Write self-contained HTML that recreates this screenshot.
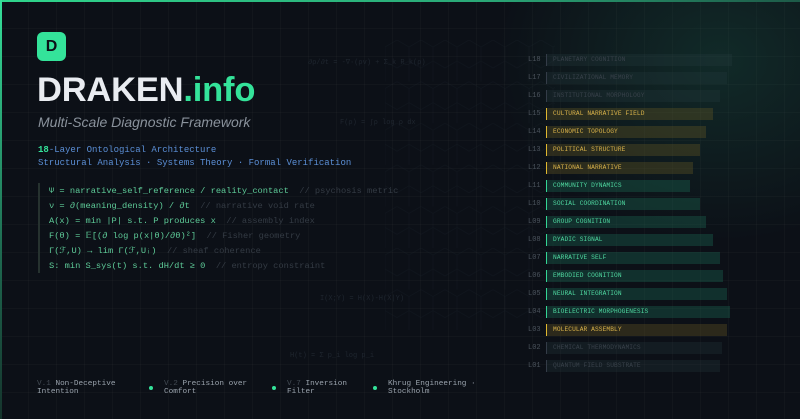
<!DOCTYPE html>
<html><head><meta charset="utf-8"><style>
*{margin:0;padding:0;box-sizing:border-box}
body{width:800px;height:419px;overflow:hidden;background:#0c1017;font-family:"Liberation Sans",sans-serif;position:relative}
.bg{position:absolute;inset:0;background:
radial-gradient(ellipse 320px 260px at 720px 60px,rgba(30,110,85,.28),transparent 70%),
linear-gradient(rgba(255,255,255,.025) 1px,transparent 1px) 0 0/28px 28px,
linear-gradient(90deg,rgba(255,255,255,.025) 1px,transparent 1px) 0 0/28px 28px,#0c1017}
.top{position:absolute;left:0;top:0;width:800px;height:2px;background:linear-gradient(90deg,#2fd58c,#2aa877 60%,#1d5a48)}
.left{position:absolute;left:0;top:0;width:2px;height:419px;background:linear-gradient(#35e09a,#1e6a50 60%,#15342c)}
.mono{font-family:"Liberation Mono","DejaVu Sans Mono",monospace}
.logo{position:absolute;left:37px;top:32px;width:29px;height:29px;border-radius:6px;background:#34e39a;color:#0c1017;font-weight:bold;font-size:16px;text-align:center;line-height:29px}
.title{position:absolute;left:37px;top:71px;font-size:34.5px;font-weight:bold;color:#e9ecf1;letter-spacing:-.2px;white-space:nowrap}
.title span{color:#34e39a}
.sub{position:absolute;left:38px;top:114px;font-size:14px;font-style:italic;color:#8a929c;white-space:nowrap}
.blue{position:absolute;left:38px;font-size:9px;color:#5b8fd6;white-space:nowrap}
.blue b{color:#34e39a}
.fbar{position:absolute;left:38px;top:183px;width:2px;height:90px;background:#26322f}
.f{position:absolute;left:49px;font-size:8.7px;color:#5ecb98;white-space:pre}
.f i{font-style:normal;color:#343b44}
.ghost{position:absolute;font-size:7px;color:#1f262f;white-space:nowrap}
.lab{position:absolute;left:528px;font-size:7px;color:#4b535c}
.bar{position:absolute;left:546px;height:12px;border-left:1.5px solid;font-size:6.2px;line-height:12px;padding-left:6px;white-space:nowrap;letter-spacing:.1px}
.g{background:rgba(40,60,65,.28);border-color:#343c48;color:#38414a}
.y{background:rgba(110,95,35,.33);border-color:#e0b830;color:#d9b24a}
.t{background:rgba(30,110,85,.35);border-color:#34d695;color:#4fd8a0}
.foot{position:absolute;top:381px;font-size:7.7px;color:#9aa3ad;line-height:7.5px;white-space:pre}
.foot em{font-style:normal;color:#434b54}
.dot{position:absolute;top:386px;width:4px;height:4px;border-radius:50%;background:#34e39a}
</style></head><body>
<div class="bg"></div>
<svg style="position:absolute;left:385px;top:40px" width="170" height="290" opacity=".2">
<defs><pattern id="h" width="24" height="41.6" patternUnits="userSpaceOnUse"><path d="M12 0l12 7v14l-12 7-12-7V7zM0 21v20.6M24 21v20.6" fill="none" stroke="#25303a" stroke-width=".8"/></pattern></defs>
<rect width="170" height="290" fill="url(#h)"/></svg>
<div class="top"></div><div class="left"></div>
<div class="logo">D</div>
<div class="title">DRAKEN<span>.info</span></div>
<div class="sub">Multi-Scale Diagnostic Framework</div>
<div class="blue mono" style="top:145px"><b>18</b>-Layer Ontological Architecture</div>
<div class="blue mono" style="top:158px">Structural Analysis · Systems Theory · Formal Verification</div>
<div class="ghost mono" style="left:308px;top:58px">∂ρ/∂t = -∇·(ρv) + Σ_k R_k(ρ)</div>
<div class="ghost mono" style="left:340px;top:119px">F(ρ) = ∫ρ log ρ dx</div>
<div class="ghost mono" style="left:320px;top:295px">I(X;Y) = H(X)-H(X|Y)</div>
<div class="ghost mono" style="left:290px;top:352px">H(t) = Σ p_i log p_i</div>
<div class="fbar"></div>
<div class="f mono" style="top:186px">Ψ = narrative_self_reference / reality_contact  <i>// psychosis metric</i></div>
<div class="f mono" style="top:201px">ν = ∂(meaning_density) / ∂t  <i>// narrative void rate</i></div>
<div class="f mono" style="top:216px">A(x) = min |P| s.t. P produces x  <i>// assembly index</i></div>
<div class="f mono" style="top:231px">F(θ) = 𝔼[(∂ log p(x|θ)/∂θ)²]  <i>// Fisher geometry</i></div>
<div class="f mono" style="top:246px">Γ(ℱ,U) → lim Γ(ℱ,Uᵢ)  <i>// sheaf coherence</i></div>
<div class="f mono" style="top:261px">S: min S_sys(t) s.t. dH/dt ≥ 0  <i>// entropy constraint</i></div>

<div class="lab mono" style="top:56px">L18</div><div class="bar mono g" style="top:54px;width:186px">PLANETARY COGNITION</div>
<div class="lab mono" style="top:74px">L17</div><div class="bar mono g" style="top:72px;width:181px">CIVILIZATIONAL MEMORY</div>
<div class="lab mono" style="top:92px">L16</div><div class="bar mono g" style="top:90px;width:174px">INSTITUTIONAL MORPHOLOGY</div>
<div class="lab mono" style="top:110px">L15</div><div class="bar mono y" style="top:108px;width:167px">CULTURAL NARRATIVE FIELD</div>
<div class="lab mono" style="top:128px">L14</div><div class="bar mono y" style="top:126px;width:160px">ECONOMIC TOPOLOGY</div>
<div class="lab mono" style="top:146px">L13</div><div class="bar mono y" style="top:144px;width:154px">POLITICAL STRUCTURE</div>
<div class="lab mono" style="top:164px">L12</div><div class="bar mono y" style="top:162px;width:147px">NATIONAL NARRATIVE</div>
<div class="lab mono" style="top:182px">L11</div><div class="bar mono t" style="top:180px;width:144px">COMMUNITY DYNAMICS</div>
<div class="lab mono" style="top:200px">L10</div><div class="bar mono t" style="top:198px;width:154px">SOCIAL COORDINATION</div>
<div class="lab mono" style="top:218px">L09</div><div class="bar mono t" style="top:216px;width:160px">GROUP COGNITION</div>
<div class="lab mono" style="top:236px">L08</div><div class="bar mono t" style="top:234px;width:167px">DYADIC SIGNAL</div>
<div class="lab mono" style="top:254px">L07</div><div class="bar mono t" style="top:252px;width:174px">NARRATIVE SELF</div>
<div class="lab mono" style="top:272px">L06</div><div class="bar mono t" style="top:270px;width:177px">EMBODIED COGNITION</div>
<div class="lab mono" style="top:290px">L05</div><div class="bar mono t" style="top:288px;width:181px">NEURAL INTEGRATION</div>
<div class="lab mono" style="top:308px">L04</div><div class="bar mono t" style="top:306px;width:184px">BIOELECTRIC MORPHOGENESIS</div>
<div class="lab mono" style="top:326px">L03</div><div class="bar mono y" style="top:324px;width:181px">MOLECULAR ASSEMBLY</div>
<div class="lab mono" style="top:344px">L02</div><div class="bar mono g" style="top:342px;width:176px">CHEMICAL THERMODYNAMICS</div>
<div class="lab mono" style="top:362px">L01</div><div class="bar mono g" style="top:360px;width:174px">QUANTUM FIELD SUBSTRATE</div>

<div class="foot mono" style="left:37px"><em>V.1</em> Non-Deceptive
Intention</div>
<div class="dot" style="left:149px"></div>
<div class="foot mono" style="left:164px"><em>V.2</em> Precision over
Comfort</div>
<div class="dot" style="left:272px"></div>
<div class="foot mono" style="left:287px"><em>V.7</em> Inversion
Filter</div>
<div class="dot" style="left:373px"></div>
<div class="foot mono" style="left:388px">Khrug Engineering ·
Stockholm</div>
</body></html>
